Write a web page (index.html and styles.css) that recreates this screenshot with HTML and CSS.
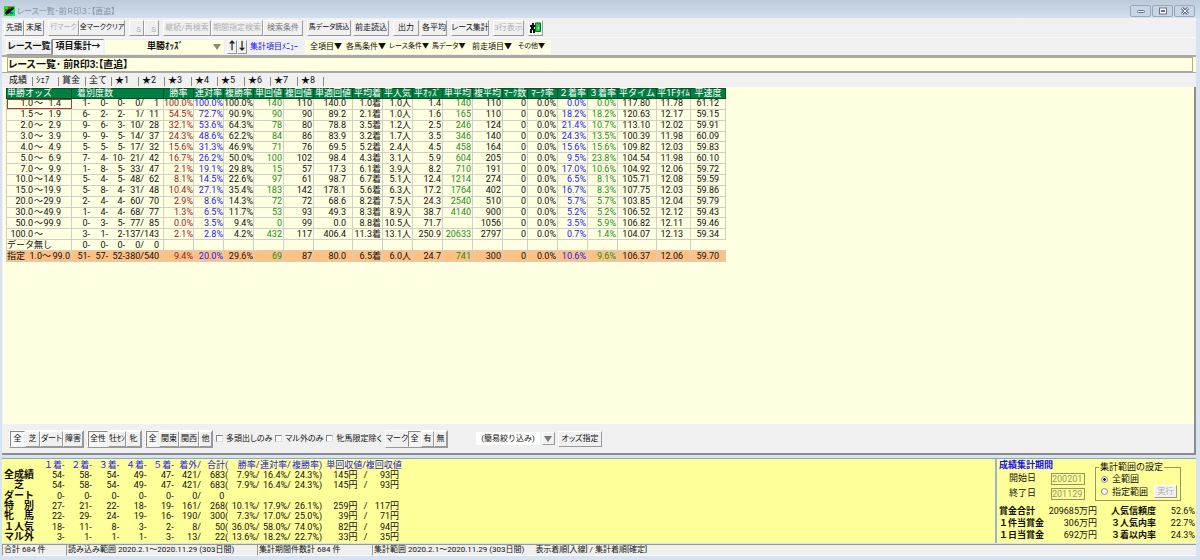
FILE: index.html
```html
<!DOCTYPE html>
<html lang="ja">
<head>
<meta charset="utf-8">
<title>レース一覧･前Ｒ印３：【直追】</title>
<link rel="stylesheet" href="styles.css">
</head>
<body>
<header class="titlebar">
  <svg class="app-icon" width="11" height="10" viewBox="0 0 11 10"><path fill="#16e23b" d="M0 0h11v10H0z"/><path fill="#111" d="M1 7l2-3 3-2 3-1 1 1-1 2-2 1-1 2-2 1-2 1z"/><path fill="#d22" d="M4 1h3v2H4zM1 3h2v2H1z"/><path fill="#15f" d="M6 6h3v2H6z"/></svg>
  <h1>レース一覧･前Ｒ印３：【直追】</h1>
  <div class="win-buttons">
    <button aria-label="最小化"><svg width="10" height="8" viewBox="0 0 10 8"><rect x="1.5" y="3.5" width="7" height="2" rx="1" fill="#fff" stroke="#6b7088"/></svg></button>
    <button aria-label="最大化"><svg width="10" height="8" viewBox="0 0 10 8"><rect x="1.5" y="1" width="7" height="6" fill="#fff" stroke="#6b7088"/><path d="M3 4h4" stroke="#6b7088" stroke-width="2"/></svg></button>
    <button aria-label="閉じる"><svg width="10" height="8" viewBox="0 0 10 8"><path d="M2 1l6 6M8 1L2 7" stroke="#6b7088" stroke-width="3"/><path d="M2 1l6 6M8 1L2 7" stroke="#fff"/></svg></button>
  </div>
</header>
<div class="window">
  <nav class="toolbar">
    <div class="group"><button class="w20">先頭</button><button class="w20">末尾</button></div>
    <div class="group"><button class="w30 tight" disabled>行マーク</button><button class="w46 tight">全マーククリア</button></div>
    <div class="group"><button class="w15 low" disabled>S</button><button class="w15 low" disabled>S</button></div>
    <div class="group"><button class="w48" disabled>継続/再検索</button><button class="w52" disabled>期間指定検索</button><button class="w40 dim">検索条件</button></div>
    <button class="w44 tight">馬データ読込</button>
    <button class="w36 near">前走読込</button>
    <button class="w26">出力</button>
    <button class="w26 near">各平均</button>
    <button class="w38">レース集計</button>
    <button class="w30" disabled>3行表示</button>
    <button class="w15" aria-label="終了"><svg width="11" height="11" viewBox="0 0 11 11"><path fill="#17d52c" stroke="#064" d="M5.500 1h5v8.500h-5z"/><path d="M2 1h2v2H2zM0 3h5v2H4v2h1v4H3V8H2v3H0V7h1V5H0z" fill="#111"/><path d="M8 5h1v2H8z" fill="#fff"/></svg></button>
  </nav>
  <nav class="toolbar second">
    <div class="group strong"><button class="w46">レース一覧</button><button class="w52 pressed">項目集計→</button></div>
    <div class="combo"><select aria-label="集計項目"><option>単勝ｵｯｽﾞ</option></select><svg width="8" height="6" viewBox="0 0 8 6"><path d="M0 0h8L4 6z" fill="#8b8b72"/></svg></div>
    <div class="group arrows"><button aria-label="上へ">↑</button><button aria-label="下へ">↓</button></div>
    <a class="menu-link" href="#menu">集計項目ﾒﾆｭｰ</a>
    <div class="menu" id="menu"><button>全項目▼</button><button>各馬条件▼</button><button class="tight">レース条件▼</button><button class="tight">馬データ▼</button><button>前走項目▼</button><button class="tight">その他▼</button></div>
  </nav>
  <div class="caption"><h2>レース一覧･ 前R印3:【直追】</h2></div>
  <nav class="tabs"><button class="active">成績</button><button>ｼｪｱ</button><button>賞金</button><button>全て</button><button>★1</button><button>★2</button><button>★3</button><button>★4</button><button>★5</button><button>★6</button><button>★7</button><button>★8</button></nav>
  <main>
    <table class="results">
      <colgroup><col class="c65"><col class="c92"><col span="5" class="c30"><col class="c39"><col span="5" class="c30"><col class="c25"><col span="3" class="c30"><col class="c39"><col class="c34"><col class="c35"></colgroup>
      <thead><tr><th>単勝オッズ<th class="dist">着別度数<th>勝率<th>連対率<th>複勝率<th>単回値<th>複回値<th>単適回値<th>平均着<th>平人気<th>平ｵｯｽﾞ<th>単平均<th>複平均<th>ﾏｰｸ数<th>ﾏｰｸ率<th>２着率<th>３着率<th>平タイム<th>平1Fﾀｲﾑ<th>平速度</tr></thead>
      <tbody>
<tr class="current"><td><p class="rng"><i>1.0</i><i>～</i><i>1.4</i></p><td><p class="cnt"><i>1-</i><i>0-</i><i>0-</i><i>0/</i><i>1</i></p><td>100.0%<td>100.0%<td>100.0%<td>140<td>110<td>140.0<td>1.0着<td>1.0人<td>1.4<td>140<td>110<td>0<td>0.0%<td>0.0%<td>0.0%<td>117.80<td>11.78<td>61.12</tr>
<tr><td><p class="rng"><i>1.5</i><i>～</i><i>1.9</i></p><td><p class="cnt"><i>6-</i><i>2-</i><i>2-</i><i>1/</i><i>11</i></p><td>54.5%<td>72.7%<td>90.9%<td>90<td>90<td>89.2<td>2.1着<td>1.0人<td>1.6<td>165<td>110<td>0<td>0.0%<td>18.2%<td>18.2%<td>120.63<td>12.17<td>59.15</tr>
<tr><td><p class="rng"><i>2.0</i><i>～</i><i>2.9</i></p><td><p class="cnt"><i>9-</i><i>6-</i><i>3-</i><i>10/</i><i>28</i></p><td>32.1%<td>53.6%<td>64.3%<td>78<td>80<td>78.8<td>3.5着<td>1.2人<td>2.5<td>246<td>124<td>0<td>0.0%<td>21.4%<td>10.7%<td>113.10<td>12.02<td>59.91</tr>
<tr><td><p class="rng"><i>3.0</i><i>～</i><i>3.9</i></p><td><p class="cnt"><i>9-</i><i>9-</i><i>5-</i><i>14/</i><i>37</i></p><td>24.3%<td>48.6%<td>62.2%<td>84<td>86<td>83.9<td>3.2着<td>1.7人<td>3.5<td>346<td>140<td>0<td>0.0%<td>24.3%<td>13.5%<td>100.39<td>11.98<td>60.09</tr>
<tr><td><p class="rng"><i>4.0</i><i>～</i><i>4.9</i></p><td><p class="cnt"><i>5-</i><i>5-</i><i>5-</i><i>17/</i><i>32</i></p><td>15.6%<td>31.3%<td>46.9%<td>71<td>76<td>69.5<td>5.2着<td>2.4人<td>4.5<td>458<td>164<td>0<td>0.0%<td>15.6%<td>15.6%<td>109.82<td>12.03<td>59.83</tr>
<tr><td><p class="rng"><i>5.0</i><i>～</i><i>6.9</i></p><td><p class="cnt"><i>7-</i><i>4-</i><i>10-</i><i>21/</i><i>42</i></p><td>16.7%<td>26.2%<td>50.0%<td>100<td>102<td>98.4<td>4.3着<td>3.1人<td>5.9<td>604<td>205<td>0<td>0.0%<td>9.5%<td>23.8%<td>104.54<td>11.98<td>60.10</tr>
<tr><td><p class="rng"><i>7.0</i><i>～</i><i>9.9</i></p><td><p class="cnt"><i>1-</i><i>8-</i><i>5-</i><i>33/</i><i>47</i></p><td>2.1%<td>19.1%<td>29.8%<td>15<td>57<td>17.3<td>6.1着<td>3.9人<td>8.2<td>710<td>191<td>0<td>0.0%<td>17.0%<td>10.6%<td>104.92<td>12.06<td>59.72</tr>
<tr><td><p class="rng"><i>10.0</i><i>～</i><i>14.9</i></p><td><p class="cnt"><i>5-</i><i>4-</i><i>5-</i><i>48/</i><i>62</i></p><td>8.1%<td>14.5%<td>22.6%<td>97<td>61<td>98.7<td>6.7着<td>5.1人<td>12.4<td>1214<td>274<td>0<td>0.0%<td>6.5%<td>8.1%<td>105.71<td>12.08<td>59.59</tr>
<tr><td><p class="rng"><i>15.0</i><i>～</i><i>19.9</i></p><td><p class="cnt"><i>5-</i><i>8-</i><i>4-</i><i>31/</i><i>48</i></p><td>10.4%<td>27.1%<td>35.4%<td>183<td>142<td>178.1<td>5.6着<td>6.3人<td>17.2<td>1764<td>402<td>0<td>0.0%<td>16.7%<td>8.3%<td>107.75<td>12.03<td>59.86</tr>
<tr><td><p class="rng"><i>20.0</i><i>～</i><i>29.9</i></p><td><p class="cnt"><i>2-</i><i>4-</i><i>4-</i><i>60/</i><i>70</i></p><td>2.9%<td>8.6%<td>14.3%<td>72<td>72<td>68.6<td>8.2着<td>7.5人<td>24.3<td>2540<td>510<td>0<td>0.0%<td>5.7%<td>5.7%<td>103.85<td>12.04<td>59.79</tr>
<tr><td><p class="rng"><i>30.0</i><i>～</i><i>49.9</i></p><td><p class="cnt"><i>1-</i><i>4-</i><i>4-</i><i>68/</i><i>77</i></p><td>1.3%<td>6.5%<td>11.7%<td>53<td>93<td>49.3<td>8.3着<td>8.9人<td>38.7<td>4140<td>900<td>0<td>0.0%<td>5.2%<td>5.2%<td>106.52<td>12.12<td>59.43</tr>
<tr><td><p class="rng"><i>50.0</i><i>～</i><i>99.9</i></p><td><p class="cnt"><i>0-</i><i>3-</i><i>5-</i><i>77/</i><i>85</i></p><td>0.0%<td>3.5%<td>9.4%<td>0<td>99<td>0.0<td>8.8着<td>10.5人<td>71.7<td><td>1056<td>0<td>0.0%<td>3.5%<td>5.9%<td>106.82<td>12.11<td>59.46</tr>
<tr><td><p class="rng"><i>100.0</i><i>～</i><i></i></p><td><p class="cnt"><i>3-</i><i>1-</i><i>2-</i><i>137/</i><i>143</i></p><td>2.1%<td>2.8%<td>4.2%<td>432<td>117<td>406.4<td>11.3着<td>13.1人<td>250.9<td>20633<td>2797<td>0<td>0.0%<td>0.7%<td>1.4%<td>104.07<td>12.13<td>59.34</tr>
<tr><td>データ無し<td><p class="cnt"><i>0-</i><i>0-</i><i>0-</i><i>0/</i><i>0</i></p><td><td><td><td><td><td><td><td><td><td><td><td><td><td><td><td><td></tr>
<tr class="total"><td><p class="sel"><i>指定</i><i>1.0</i><i>～</i><i>99.0</i></p><td><p class="cnt"><i>51-</i><i>57-</i><i>52-</i><i>380/</i><i>540</i></p><td>9.4%<td>20.0%<td>29.6%<td>69<td>87<td>80.0<td>6.5着<td>6.0人<td>24.7<td>741<td>300<td>0<td>0.0%<td>10.6%<td>9.6%<td>106.37<td>12.06<td>59.70</tr>
      </tbody>
    </table>
  </main>
  <div class="filters">
    <div class="group"><button class="w15 pressed">全</button><button class="w15">芝</button><button class="w22">ダート</button><button class="w20">障害</button></div>
    <div class="group"><button class="w20 pressed">全性</button><button class="w18">牡ｾﾝ</button><button class="w15">牝</button></div>
    <div class="group"><button class="w12 pressed">全</button><button class="w20">関東</button><button class="w20">関西</button><button class="w12">他</button></div>
    <label><input type="checkbox">多頭出しのみ</label>
    <label><input type="checkbox">マル外のみ</label>
    <label><input type="checkbox">牝馬限定除く</label>
    <div class="group"><span class="mark">マーク</span><button class="w12 pressed">全</button><button class="w12">有</button><button class="w12">無</button></div>
    <div class="simple"><select aria-label="簡易絞り込み"><option>(簡易絞り込み)</option></select><button class="w12" aria-label="開く"><svg width="8" height="6" viewBox="0 0 8 6"><path d="M0 0h8L4 6z" fill="#777"/></svg></button></div>
    <button class="w44">オッズ指定</button>
  </div>
</div>
<div class="summary">
  <section class="records">
    <table>
      <colgroup><col class="r0"><col class="r1"><col span="6" class="r2"><col class="r3"><col span="2" class="r4"><col class="r5"><col class="r6"><col class="r7"></colgroup>
      <thead><tr><th></th><th>１着-</th><th>２着-</th><th>３着-</th><th>４着-</th><th>５着-</th><th>着外/</th><th>合計(</th><th>勝率/</th><th>連対率/</th><th>複勝率)</th><th colspan="3" class="yen">単回収値/複回収値</th></tr></thead>
      <tbody>
        <tr><th>全成績<td>54-<td>58-<td>54-<td>49-<td>47-<td>421/<td>683(<td>7.9%/<td>16.4%/<td>24.3%)<td>145円<td>/<td>93円</tr>
        <tr><th>　芝<td>54-<td>58-<td>54-<td>49-<td>47-<td>421/<td>683(<td>7.9%/<td>16.4%/<td>24.3%)<td>145円<td>/<td>93円</tr>
        <tr><th>ダート<td>0-<td>0-<td>0-<td>0-<td>0-<td>0/<td class="bare">0<td><td><td><td><td><td></tr>
        <tr><th>特　別<td>27-<td>21-<td>22-<td>18-<td>19-<td>161/<td>268(<td>10.1%/<td>17.9%/<td>26.1%)<td>259円<td>/<td>117円</tr>
        <tr><th>牝　馬<td>22-<td>29-<td>24-<td>19-<td>16-<td>190/<td>300(<td>7.3%/<td>17.0%/<td>25.0%)<td>39円<td>/<td>71円</tr>
        <tr><th>１人気<td>18-<td>11-<td>8-<td>3-<td>2-<td>8/<td>50(<td>36.0%/<td>58.0%/<td>74.0%)<td>82円<td>/<td>94円</tr>
        <tr><th>マル外<td>3-<td>1-<td>1-<td>1-<td>3-<td>13/<td>22(<td>13.6%/<td>18.2%/<td>22.7%)<td>33円<td>/<td>35円</tr>
      </tbody>
    </table>
  </section>
  <section class="period">
    <div class="period-top">
      <div class="dates">
        <h3>成績集計期間</h3>
        <label>開始日<input type="text" value="200201" disabled></label>
        <label>終了日<input type="text" value="201129" disabled></label>
      </div>
      <fieldset>
        <legend>集計範囲の設定</legend>
        <label><input type="radio" name="range" checked>全範囲</label>
        <div class="range-row"><label><input type="radio" name="range">指定範囲</label><button class="w22" disabled>実行</button></div>
      </fieldset>
    </div>
    <table>
      <tr><th>賞金合計<td>209685万円<th>人気信頼度<td>52.6%</tr>
      <tr><th>１件当賞金<td>306万円<th>３人気内率<td>22.7%</tr>
      <tr><th>１日当賞金<td>692万円<th>３着以内率<td>24.3%</tr>
    </table>
  </section>
</div>
<footer class="status"><span class="s1">合計 684 件</span><span class="s2">読み込み範囲 2020.2.1～2020.11.29 (303日間)</span><span class="s3">集計期間件数計 684 件</span><span class="s4">集計範囲 2020.2.1～2020.11.29 (303日間)<b>表示着順[入線] / 集計着順[確定]</b></span></footer>
</body>
</html>
```
FILE: styles.css
```css
* { box-sizing: border-box; }
body {
  margin: 0;
  min-height: 100vh;
  padding: 0 4px 4px 2px;
  display: flex;
  flex-direction: column;
  background: #d5e3f3;
  color: #111;
  font: 9px/11px Roboto, "Noto Sans CJK JP", sans-serif;
}
h1, h2, h3, p { margin: 0; font-weight: normal; }
i { font-style: normal; }
svg { display: block; }
button, select, input { font: inherit; color: inherit; margin: 0; padding: 0; }

.titlebar {
  display: flex;
  align-items: center;
  height: 18px;
  margin: 0 -4px 0 -2px;
  padding: 4px 5px 0 4px;
  background: linear-gradient(#bccad9, #d3e0ee);
}
.titlebar h1 { flex: 1; margin-left: 2px; font-size: 8px; color: #8792a0; font-feature-settings: "palt"; }
.win-buttons { display: flex; gap: 1px; }
.win-buttons button {
  display: grid;
  place-items: center;
  width: 21px;
  height: 12px;
  border: 1px solid #98a9bf;
  border-radius: 2px;
  background: #c8d5e4;
}

.window {
  flex: 1;
  display: flex;
  flex-direction: column;
  background: #f0f0f0;
  border-bottom: 2px solid #8d8d8d;
}
.toolbar {
  display: flex;
  align-items: center;
  gap: 4px;
  height: 19px;
  padding-left: 2px;
  white-space: nowrap;
}
.toolbar > * { flex: none; }
.group { display: flex; }
.toolbar button, .filters button, .period button {
  display: flex;
  flex: none;
  align-items: center;
  justify-content: center;
  height: 16px;
  border: 1px solid;
  border-color: #fff #999 #999 #fff;
  background: #f0f0f0;
  font-size: 8px;
  white-space: nowrap;
  font-feature-settings: "palt";
}
.toolbar button:disabled, .period button:disabled { color: #b0b0b0; }
.toolbar .dim { color: #777; }
.toolbar .tight { font-size: 7px; }
.toolbar .low { align-items: flex-end; padding-left: 4px; }
.toolbar .near { margin-left: -2px; }
.toolbar .pressed, .filters .pressed { border-color: #888 #eee #eee #888; background: #f8f8f8; }
.w12 { width: 13px; }
.w15 { width: 15px; }
.w18 { width: 18px; }
.w20 { width: 20px; }
.w22 { width: 23px; }
.w26 { width: 26px; }
.w30 { width: 31px; }
.w36 { width: 36px; }
.w38 { width: 38px; }
.w40 { width: 40px; }
.w44 { width: 44px; }
.w46 { width: 46px; }
.w48 { width: 48px; }
.w52 { width: 52px; }

.second { height: 18px; gap: 3px; padding-left: 4px; border-top: 1px solid #fafafa; }
.second .strong button { font-size: 9px; font-weight: bold; }
.combo { display: flex; align-items: center; width: 119px; height: 14px; margin-left: -2px; padding: 0 3px 0 12px; background: #ffffe1; }
.combo select { flex: 1; appearance: none; border: 0; background: none; font-size: 9px; font-weight: bold; text-align: center; text-align-last: center; }
.second .arrows button { width: 10px; height: 14px; font-size: 11px; font-weight: bold; }
.menu-link { width: 52px; color: #1010f0; text-decoration: none; font-size: 8px; }
.menu { display: grid; grid-template-columns: 36px 43px 43px 40px 46px 33px; height: 14px; padding: 0 0 0 5px; background: #ffffe1; }
.second .menu button { justify-content: flex-start; height: 14px; border: 0; background: none; }

.caption {
  border-top: 2px solid #aaa9a2;
  padding: 0 3px 0 5px;
  background: #ffffe1;
}
.caption h2 {
  height: 15px;
  border: 1px solid #aaa99c;
  font-size: 10px;
  line-height: 13px;
  font-weight: bold;
  font-feature-settings: "palt";
}
.tabs { display: flex; height: 15px; padding-left: 4px; border-top: 1px solid #aaa; }
.tabs button {
  width: 27px;
  height: 13px;
  padding: 0 0 0 3px;
  border: 0;
  background: linear-gradient(#888, #888) right 4px / 1px 9px no-repeat;
  font-size: 9px;
  line-height: 14px;
  text-align: left;
}
.tabs button:nth-child(even) { width: 26px; }
.tabs .active { line-height: 10px; }

main {
  flex: 1;
  padding: 1px 0 0 3px;
  border-right: 2px solid #8d8d8d;
  margin-left: 1px;
  background: #ffffe1;
}
table { border-collapse: collapse; table-layout: fixed; }
td, th { padding: 0; white-space: nowrap; font-weight: normal; }
.results { width: 719px; height: 174px; line-height: 9px; font-size: 9px; }
.results td, .results th { border: 1px solid #d0d0c8; text-align: right; }
.results th { background: #008040; color: #fff; border-color: #064d2c; text-align: center; }
.results th:first-child, .results td:first-child { text-align: left; }
.results .dist { text-align: left; padding-left: 5px; }
.results td:nth-child(3) { color: #a02020; }
.results td:nth-child(4), .results td:nth-child(16) { color: #2020ff; }
.results td:nth-child(6), .results td:nth-child(12), .results td:nth-child(17) { color: #209020; }
.results td:nth-child(n+6) { padding-right: 1px; }
.results td:nth-child(8) { padding-right: 6px; }
.results td:nth-child(n+18) { padding-right: 6px; }
.results td:nth-child(19) { padding-right: 7px; }
.results .total td { background: #ffc080; }
.results .current td:first-child { outline: 1px solid #a04030; outline-offset: -1px; }
.c65 { width: 65px; }
.c92 { width: 92px; }
.c39 { width: 39px; }
.c30 { width: 30px; }
.c25 { width: 25px; }
.c34 { width: 34px; }
.c35 { width: 35px; }
.rng, .sel, .cnt { display: grid; text-align: right; }
.rng { grid-template-columns: 26px 10px 18px; }
.sel { grid-template-columns: 18px 17px 9px 19px; }
.cnt { grid-template-columns: 18px 18px 17px 19px 15px; }

.filters {
  display: flex;
  align-items: center;
  gap: 3px;
  height: 29px;
  padding-left: 7px;
  white-space: nowrap;
  border-right: 2px solid #8d8d8d;
}
.filters .group { border: 1px solid; border-color: #fff #999 #999 #fff; }
.filters label, .mark { font-size: 8px; font-feature-settings: "palt"; display: flex; align-items: center; gap: 3px; }
.mark { width: 22px; }
.filters input { appearance: none; width: 7px; height: 7px; background: #fff; border: 1px solid; border-color: #888 #ddd #ddd #888; }
.simple { display: flex; align-items: center; gap: 2px; margin-left: 25px; }
.simple select { appearance: none; width: 64px; height: 13px; border: 0; background: #fff; font-size: 8px; text-align: center; text-align-last: center; }
.simple button { height: 13px; }

.summary { display: flex; margin-top: 3px; background: #ffff99; border-top: 1px solid #8ba6c8; }
.records { flex: 1; padding: 1px 0 1px 2px; }
.records table { width: 395px; height: 82px; line-height: 10px; }
.records td { text-align: right; }
.records th { text-align: right; }
.records thead th { color: #2020e0; }
.records tbody th { text-align: left; font-weight: bold; font-size: 10px; }
.records .bare { padding-right: 4px; }
.r0 { width: 33px; }
.r1 { width: 27px; }
.r2 { width: 27px; }
.r3 { width: 31px; }
.r4 { width: 31px; }
.r5 { width: 35px; }
.r6 { width: 10px; }
.r7 { width: 31px; }
.records thead .yen { padding-left: 4px; text-align: left; }

.period { width: 201px; padding: 1px 0 1px 2px; border-left: 2px solid #9bb4d2; }
.period-top { display: flex; justify-content: space-between; padding-right: 15px; }
.dates { width: 86px; }
.dates h3 { font-size: 9px; font-weight: bold; color: #1010f0; }
.dates label { display: flex; justify-content: space-between; align-items: center; height: 15px; padding-left: 10px; }
.dates input { width: 34px; height: 12px; border: 1px solid #98985c; background: none; color: #98986a; font-size: 9px; }
fieldset { width: 86px; min-width: 0; height: 39px; margin: 2px 0 0; padding: 0 3px 0 5px; border: 1px solid #98985c; }
legend { padding: 0 1px; margin-left: -2px; line-height: 11px; }
fieldset label { display: flex; align-items: center; gap: 4px; line-height: 12px; }
fieldset input { appearance: none; width: 7px; height: 7px; border: 1px solid #888; border-radius: 50%; background: #fff; }
fieldset input:checked { background: radial-gradient(#111 30%, #fff 45%); }
.range-row { display: flex; justify-content: space-between; align-items: center; }
.period .range-row button { height: 13px; }
.period table { width: 196px; height: 35px; margin-top: 5px; line-height: 11px; }
.period th { text-align: left; font-weight: bold; }
.period td { text-align: right; }
.period th:nth-child(3) { padding-left: 14px; }

.status { display: flex; height: 12px; margin-top: 1px; background: #f0f0f0; font-size: 8px; line-height: 10px; white-space: nowrap; }
.status span { border-left: 1px solid #999; border-top: 1px solid #999; padding-left: 1px; border-bottom: 1px solid #fff; }
.status b { font-weight: normal; margin-left: 11px; }
.s1 { width: 64px; }
.s2 { width: 191px; }
.s3 { width: 115px; }
.s4 { flex: 1; }
```
